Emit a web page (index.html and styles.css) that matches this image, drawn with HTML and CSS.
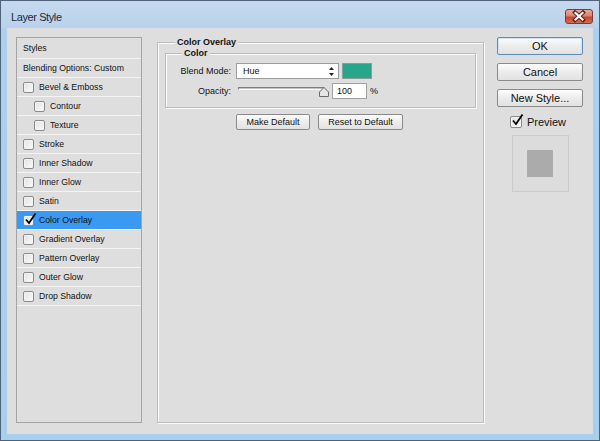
FILE: index.html
```html
<!DOCTYPE html>
<html>
<head>
<meta charset="utf-8">
<link rel="stylesheet" href="styles.css">
</head>
<body>
<div class="window">
  <div class="titlebar">
    <span class="title">Layer Style</span>
    <div class="close">
      <svg width="26" height="13" viewBox="0 0 26 13">
        <path d="M9 2.5 L17 10 M17 2.5 L9 10" stroke="#5b1d16" stroke-width="4" stroke-linecap="square"/>
        <path d="M9.5 3 L16.5 9.5 M16.5 3 L9.5 9.5" stroke="#ffffff" stroke-width="2.2" stroke-linecap="square"/>
      </svg>
    </div>
  </div>
  <div class="client">
    <div class="styles-list">
      <div class="row head">Styles</div>
      <div class="row">Blending Options: Custom</div>
      <div class="row"><span class="cb"></span>Bevel &amp; Emboss</div>
      <div class="row sub"><span class="cb"></span>Contour</div>
      <div class="row sub"><span class="cb"></span>Texture</div>
      <div class="row"><span class="cb"></span>Stroke</div>
      <div class="row"><span class="cb"></span>Inner Shadow</div>
      <div class="row"><span class="cb"></span>Inner Glow</div>
      <div class="row"><span class="cb"></span>Satin</div>
      <div class="row selected"><span class="cb"><svg class="check" width="13" height="13" viewBox="0 0 13 13"><path d="M2 6.5 L5 10 L11.5 0.5" fill="none" stroke="#000" stroke-width="1.8"/></svg></span>Color Overlay</div>
      <div class="row"><span class="cb"></span>Gradient Overlay</div>
      <div class="row"><span class="cb"></span>Pattern Overlay</div>
      <div class="row"><span class="cb"></span>Outer Glow</div>
      <div class="row"><span class="cb"></span>Drop Shadow</div>
    </div>

    <fieldset class="group outer">
      <legend>Color Overlay</legend>
      <fieldset class="group inner">
        <legend>Color</legend>
        <div class="field">
          <span class="label">Blend Mode:</span>
          <div class="select">
            <span>Hue</span>
            <svg width="5" height="9" viewBox="0 0 5 9"><path d="M2.5 0 L5 3 L0 3 Z M2.5 9 L5 6 L0 6 Z" fill="#222"/></svg>
          </div>
          <div class="swatch"></div>
        </div>
        <div class="field">
          <span class="label">Opacity:</span>
          <div class="slider">
            <div class="track"></div>
            <svg class="thumb" width="10" height="10" viewBox="0 0 10 10"><path d="M5 0.5 L9.5 5 L9.5 9.5 L0.5 9.5 L0.5 5 Z" fill="#e6e6e6" stroke="#6b6b6b"/></svg>
          </div>
          <div class="num">100</div>
          <span class="pct">%</span>
        </div>
      </fieldset>
      <div class="btn-row">
        <div class="btn small w74">Make Default</div>
        <div class="btn small w85">Reset to Default</div>
      </div>
    </fieldset>

    <div class="side">
      <div class="btn big default">OK</div>
      <div class="btn big">Cancel</div>
      <div class="btn big">New Style...</div>
      <div class="preview-check">
        <span class="cb big-cb"><svg class="check" width="13" height="13" viewBox="0 0 13 13"><path d="M2 6.5 L5 10 L11.5 0.5" fill="none" stroke="#000" stroke-width="1.8"/></svg></span>
        <span>Preview</span>
      </div>
      <div class="preview-box"><div class="preview-inner"></div></div>
    </div>
  </div>
</div>
</body>
</html>
```

FILE: styles.css
```css
html, body {
  margin: 0;
  padding: 0;
  background: #dedede;
}

body {
  font-family: "Liberation Sans", Arial, sans-serif;
  color: #111;
}

.window {
  width: 600px;
  height: 441px;
  box-sizing: border-box;
  border: 1px solid #50627a;
  background: linear-gradient(#c6daef 0px, #b9d1ea 27px, #acd0ef 28px, #a9cfee 100%);
  display: flex;
  flex-direction: column;
}

.titlebar {
  height: 27px;
  display: flex;
  justify-content: space-between;
  align-items: flex-start;
  padding: 0 6px 0 10px;
}

.title {
  font-size: 11px;
  line-height: 12px;
  margin-top: 10px;
  color: #1e2a38;
  letter-spacing: -0.4px;
}

.close {
  width: 28px;
  height: 15px;
  box-sizing: border-box;
  margin-top: 8px;
  border: 1px solid #84392e;
  border-radius: 3px;
  background: linear-gradient(#eaa89a 0%, #d98473 45%, #c44733 55%, #d56a52 100%);
  display: flex;
  align-items: center;
  justify-content: center;
}

.close svg {
  display: block;
}

.client {
  flex: 1;
  margin: 0 6px 6px 6px;
  background: #dedede;
  display: flex;
  padding: 9px 10px 11px 9px;
}

/* left styles list */
.styles-list {
  width: 126px;
  box-sizing: border-box;
  border: 1px solid #a4a4a4;
  background: #dedede;
  font-size: 8.7px;
}

.row {
  height: 18px;
  border-bottom: 1px solid #f4f4f4;
  display: flex;
  align-items: center;
  padding-left: 6px;
  white-space: nowrap;
}

.row.head {
  height: 20px;
}

.row.sub {
  padding-left: 17px;
}

.row.selected {
  background: #3a9af2;
}

.cb {
  width: 11px;
  height: 11px;
  box-sizing: border-box;
  border: 1px solid #8b8b8b;
  border-radius: 2px;
  background: linear-gradient(135deg, #e2e2e2, #fbfbfb);
  box-shadow: inset 0 0 0 1px #f4f4f4;
  margin-right: 5px;
  flex: none;
  position: relative;
}

.check {
  position: absolute;
  left: 0px;
  top: -3px;
}

/* center group */
.group {
  margin: 0;
  border: 1px solid #bcbcbc;
  box-shadow: inset 1px 1px 0 #fbfbfb, 1px 1px 0 #fbfbfb;
}

.group legend {
  font-size: 9px;
  font-weight: bold;
  line-height: 11px;
  padding: 0 2px;
  background: #dedede;
  color: #111;
}

.outer {
  margin-left: 15px;
  width: 327px;
  box-sizing: border-box;
  padding: 0 7px;
}

.outer > legend {
  margin-left: 10px;
}

.inner {
  padding: 0 0 8px 0;
}

.inner > legend {
  margin-left: 16px;
}

.field {
  display: flex;
  align-items: center;
  height: 16px;
  margin-top: 4px;
  font-size: 9px;
}

.label {
  width: 65px;
  text-align: right;
  margin-right: 5px;
  flex: none;
}

.select {
  width: 103px;
  height: 16px;
  box-sizing: border-box;
  border: 1px solid #9c9c9c;
  background: #fff;
  display: flex;
  align-items: center;
  justify-content: space-between;
  padding: 0 4px 0 6px;
}

.select svg {
  display: block;
}

.swatch {
  width: 30px;
  height: 16px;
  box-sizing: border-box;
  margin-left: 3px;
  border: 1px solid #8f9a97;
  background: #28a68c;
}

.slider {
  position: relative;
  width: 91px;
  height: 16px;
  margin-left: 2px;
  align-self: flex-start;
}

.track {
  margin-top: 4px;
  width: 87px;
  height: 3px;
  box-sizing: border-box;
  border-top: 1px solid #7c7c7c;
  border-left: 1px solid #7c7c7c;
  border-bottom: 1px solid #fafafa;
  border-right: 1px solid #fafafa;
  background: #c4c4c4;
}

.thumb {
  position: absolute;
  left: 81px;
  top: 4px;
  display: block;
}

.num {
  width: 35px;
  height: 16px;
  box-sizing: border-box;
  border: 1px solid #a2a2a2;
  background: #fff;
  margin-left: 3px;
  padding-left: 4px;
  line-height: 14px;
}

.pct {
  margin-left: 3px;
}

.btn-row {
  display: flex;
  gap: 8px;
  padding-left: 71px;
  margin-top: 6px;
}

.btn {
  box-sizing: border-box;
  border: 1px solid #8a8a8a;
  border-radius: 2px;
  background: linear-gradient(#fdfdfd, #ececec 50%, #e2e2e2);
  display: flex;
  align-items: center;
  justify-content: center;
  color: #111;
  white-space: nowrap;
}

.btn.small {
  height: 16px;
  font-size: 9px;
}

.w74 { width: 74px; }
.w85 { width: 85px; }

/* right column */
.side {
  width: 86px;
  margin-left: 13px;
  display: flex;
  flex-direction: column;
  gap: 8px;
}

.btn.big {
  height: 18px;
  font-size: 11px;
}

.btn.default {
  border-color: #5d8cbf;
  box-shadow: inset 0 0 0 1px #cfe3f5;
}

.preview-check {
  display: flex;
  align-items: center;
  justify-content: center;
  font-size: 11px;
  height: 12px;
  margin-top: 1px;
  padding-right: 4px;
}

.big-cb {
  width: 12px;
  height: 12px;
}

.preview-box {
  align-self: center;
  width: 57px;
  height: 57px;
  box-sizing: border-box;
  border: 1px solid #cbcbcb;
  background: #dcdcdc;
  display: flex;
  align-items: center;
  justify-content: center;
  margin-top: -1px;
}

.preview-inner {
  width: 26px;
  height: 27px;
  background: #ababab;
}
```
